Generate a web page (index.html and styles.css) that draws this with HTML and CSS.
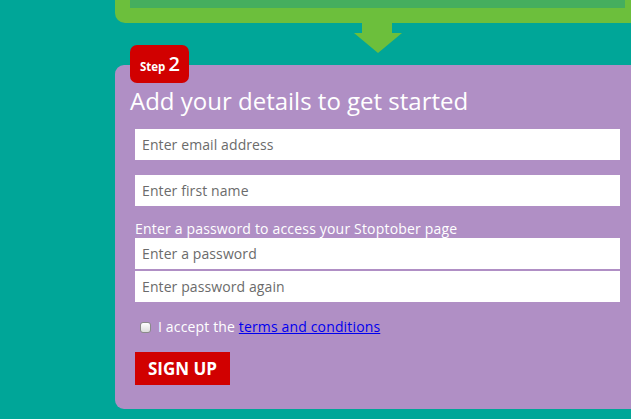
FILE: index.html
```html
<!DOCTYPE html>
<html lang="en">
<head>
<meta charset="utf-8">
<title>Stoptober sign up</title>
<link rel="stylesheet" href="styles.css">
</head>
<body>
<div class="page">
  <div class="prev-step"><div class="prev-inner"></div></div>
  <div class="arrow">
    <svg width="48" height="30" viewBox="0 0 48 30" aria-hidden="true">
      <rect x="8" y="0" width="30" height="11" fill="#6cbf3c"/>
      <polygon points="0,10 48,10 24,30" fill="#6cbf3c"/>
    </svg>
  </div>
  <section class="step">
    <div class="badge"><span class="badge-label">Step</span><span class="badge-num">2</span></div>
    <h2 class="title">Add your details to get started</h2>
    <form class="form">
      <input class="field" type="email" placeholder="Enter email address">
      <input class="field field-gap" type="text" placeholder="Enter first name">
      <label class="label">Enter a password to access your Stoptober page</label>
      <input class="field" type="password" placeholder="Enter a password">
      <input class="field field-tight" type="password" placeholder="Enter password again">
      <div class="accept">
        <input class="check" type="checkbox" id="terms">
        <label for="terms" class="accept-text">I accept the <a href="#" class="link">terms and conditions</a></label>
      </div>
      <button type="button" class="signup">SIGN UP</button>
    </form>
  </section>
</div>
</body>
</html>
```

FILE: styles.css
```css
html, body {
  margin: 0;
  padding: 0;
}
body {
  background: #00a698;
  font-family: "Open Sans", "Liberation Sans", sans-serif;
  overflow: hidden;
  width: 631px;
  height: 419px;
}
.page {
  display: flex;
  flex-direction: column;
  align-items: flex-start;
}
.prev-step {
  margin-left: 115px;
  width: 495px;
  padding: 0 15px 15px 15px;
  background: #6cbf3c;
  border-bottom-left-radius: 10px;
  flex-shrink: 0;
}
.prev-inner {
  height: 8px;
  background: #45ae5e;
}
.arrow {
  margin-left: 354px;
  height: 30px;
  display: flex;
}
.step {
  position: relative;
  margin-top: 12px;
  margin-left: 115px;
  width: 485px;
  padding: 21px 35px 24px 15px;
  background: #b08fc5;
  border-top-left-radius: 9px;
  border-bottom-left-radius: 9px;
  flex-shrink: 0;
  color: #fff;
}
.badge {
  position: absolute;
  top: -20px;
  left: 15px;
  width: 59px;
  height: 38px;
  box-sizing: border-box;
  padding: 7px 0 0 10px;
  background: #d10000;
  border-radius: 7px;
  display: flex;
  align-items: baseline;
  gap: 3px;
  color: #fff;
}
.badge-label {
  font-size: 11.5px;
  font-weight: 700;
  line-height: 24px;
}
.badge-num {
  font-size: 20px;
  font-weight: 600;
  line-height: 24px;
}
.title {
  position: relative;
  margin: 0;
  font-size: 24px;
  font-weight: 500;
  line-height: 30px;
}
.form {
  margin: 13px 0 0 5px;
  display: flex;
  flex-direction: column;
  align-items: flex-start;
}
.field {
  width: 485px;
  height: 31px;
  box-sizing: border-box;
  border: none;
  margin: 0;
  padding: 0 7px;
  background: #fff;
  font-family: "Open Sans", "Liberation Sans", sans-serif;
  font-size: 14px;
  letter-spacing: 0.1px;
  color: #555;
  outline: none;
}
.field::placeholder {
  color: #6b6b6b;
}
.field-gap {
  margin-top: 15px;
}
.label {
  margin-top: 14px;
  font-size: 14px;
  font-weight: 500;
  letter-spacing: 0.18px;
  line-height: 18px;
  color: #fff;
}
.field-tight {
  margin-top: 2px;
}
.accept {
  margin-top: 15px;
  margin-left: 5px;
  display: flex;
  align-items: center;
  gap: 7px;
  height: 20px;
}
.check {
  appearance: none;
  -webkit-appearance: none;
  margin: 0;
  width: 11px;
  height: 11px;
  border: 1px solid #8a8a8a;
  border-radius: 3px;
  background: linear-gradient(#ffffff, #dcdcdc);
}
.accept-text {
  font-size: 14px;
  font-weight: 500;
  letter-spacing: 0.15px;
  line-height: 20px;
  color: #fff;
}
.link {
  color: #0000ee;
  text-decoration: underline;
}
.signup {
  margin-top: 15px;
  width: 95px;
  height: 33px;
  border: none;
  padding: 0;
  background: #d10000;
  color: #fff;
  font-family: "Open Sans", "Liberation Sans", sans-serif;
  font-size: 17px;
  font-weight: 700;
  letter-spacing: 0;
}
```
